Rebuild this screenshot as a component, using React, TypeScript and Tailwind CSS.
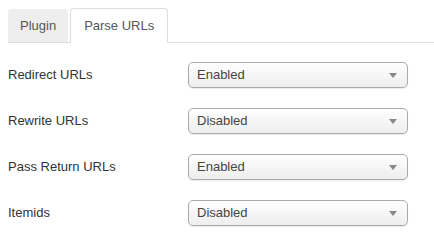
import React from "react";

const rows = [
  { label: "Redirect URLs", value: "Enabled" },
  { label: "Rewrite URLs", value: "Disabled" },
  { label: "Pass Return URLs", value: "Enabled" },
  { label: "Itemids", value: "Disabled" },
];

const Select: React.FC<{ value: string }> = ({ value }) => (
  <div className="flex items-center justify-between w-[220px] h-[26px] pl-[8px] pr-[10px] border border-[#aaa] rounded-[5px] bg-gradient-to-b from-white via-[#f6f6f6] to-[#eeeeee] shadow-[0_1px_1px_rgba(0,0,0,0.08)] text-[13px] text-[#444]">
    <span>{value}</span>
    <svg width="8" height="5" viewBox="0 0 8 5">
      <path d="M0 0h8L4 5z" fill="#888" />
    </svg>
  </div>
);

export default function App() {
  return (
    <div
      className="w-[434px] h-[249px] bg-white p-[8px] text-[13px] text-[#333]"
      style={{ fontFamily: '"Liberation Sans", Arial, sans-serif' }}
    >
      <div className="flex items-end h-[35px] -mr-[8px] border-b border-[#ddd]">
        <div className="h-[34px] flex items-center px-[12px] mr-[2px] bg-[#eeeeee] rounded-t-[4px] text-[#555] -mb-px border-b border-[#ddd]">
          Plugin
        </div>
        <div className="h-[35px] flex items-center px-[13px] bg-white border border-[#ddd] border-b-white rounded-t-[4px] text-[#555] -mb-px">
          Parse URLs
        </div>
      </div>
      <div className="flex flex-col gap-[20px] mt-[19px]">
        {rows.map((r) => (
          <div key={r.label} className="flex items-center h-[26px]">
            <div className="w-[180px]">{r.label}</div>
            <Select value={r.value} />
          </div>
        ))}
      </div>
    </div>
  );
}
